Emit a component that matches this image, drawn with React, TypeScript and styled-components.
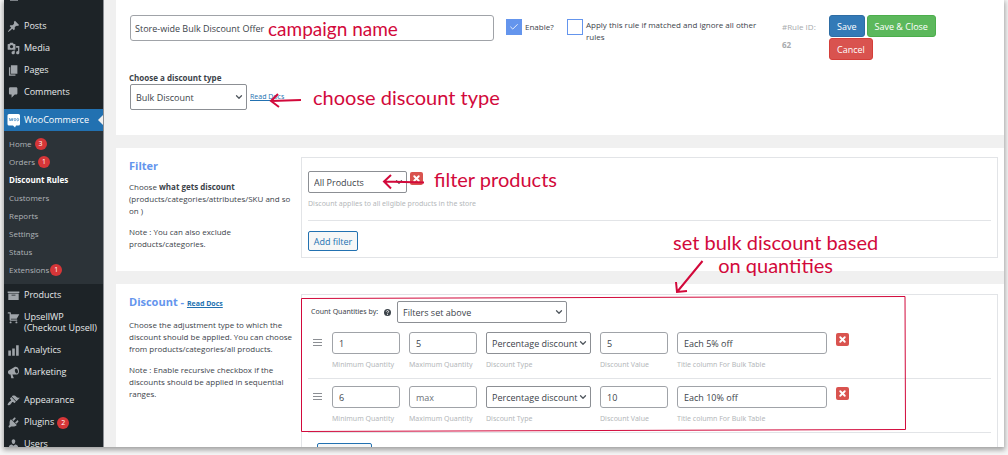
import React from "react";
import styled, { createGlobalStyle } from "styled-components";
import { ChevronDown, X, Check } from "lucide-react";

const FONT = '"Open Sans", "Noto Sans", sans-serif';
const SMALL_FONT = '"Noto Sans", "Open Sans", sans-serif';
const RED = "#d2093b";

const GlobalStyle = createGlobalStyle`
  *, *::before, *::after { box-sizing: border-box; }
  body {
    margin: 0;
    background: #f6f6f6;
    font-family: ${FONT};
    font-size: 9px;
    line-height: 12px;
    color: #3c434a;
  }
  input, select, button { font-family: inherit; font-size: inherit; color: inherit; }
  p, h2, ul { margin: 0; padding: 0; }
`;

const Page = styled.div`
  height: 100vh;
  padding: 0 4px 8px;
`;

const Frame = styled.div`
  position: relative;
  display: flex;
  height: 100%;
  overflow: hidden;
  background: #f0f0f0;
`;

const Shadow = styled.div`
  height: 100%;
  box-shadow: 0 2px 5px 1px rgba(0, 0, 0, 0.35);
`;

/* ---------- sidebar ---------- */

const Sidebar = styled.nav`
  flex: 0 0 100px;
  background: #1d2327;
  border-right: 1px solid #8c8f94;
`;

const PreviousItem = styled.div`
  height: 15px;
  padding-left: 6px;
  &::before {
    content: "";
    display: block;
    width: 8px;
    height: 1px;
    background: #7d8287;
  }
`;

const MenuGroup = styled.ul`
  list-style: none;
  padding-bottom: 6px;
`;

const MenuLink = styled.a<{ $active?: boolean; $tall?: boolean }>`
  position: relative;
  display: grid;
  grid-template-columns: 13px 1fr;
  column-gap: 4px;
  align-items: ${(p) => (p.$tall ? "start" : "center")};
  min-height: ${(p) => (p.$tall ? 33 : 22)}px;
  padding: ${(p) => (p.$tall ? "5px 0 4px 3px" : "0 0 0 3px")};
  line-height: ${(p) => (p.$tall ? 11 : 12)}px;
  color: ${(p) => (p.$active ? "#ffffff" : "#e6e8ea")};
  background: ${(p) => (p.$active ? "#2271b1" : "transparent")};
  text-decoration: none;
  white-space: nowrap;
  svg { display: block; fill: #a0a5aa; }
  &::after {
    content: "";
    display: ${(p) => (p.$active ? "block" : "none")};
    position: absolute;
    right: 0;
    top: 6px;
    border: 5px solid transparent;
    border-left-width: 0;
    border-right-color: #f0f0f0;
  }
`;

const SubMenu = styled.ul`
  list-style: none;
  padding: 4px 0 5px;
  background: #2c3338;
`;

const SubLink = styled.a<{ $current?: boolean }>`
  display: flex;
  align-items: center;
  height: 18px;
  padding-left: 5px;
  color: ${(p) => (p.$current ? "#ffffff" : "#b0b4b8")};
  font-size: 8px;
  font-weight: ${(p) => (p.$current ? 700 : 400)};
  text-decoration: none;
`;

const Badge = styled.span<{ $tight?: boolean }>`
  display: inline-flex;
  align-items: center;
  justify-content: center;
  width: 12px;
  height: 12px;
  margin-left: ${(p) => (p.$tight ? 1 : 3)}px;
  border-radius: 50%;
  background: #d63638;
  color: #ffffff;
  font-size: 7px;
  line-height: 12px;
  font-weight: 400;
`;

/* ---------- content ---------- */

const Content = styled.main`
  flex: 1;
  min-width: 0;
  display: flex;
  flex-direction: column;
  gap: 13px;
  padding-left: 12px;
`;

const Panel = styled.section`
  background: #ffffff;
`;

const SplitPanel = styled(Panel)`
  display: grid;
  grid-template-columns: 172px minmax(0, 1fr);
  align-items: start;
  padding: 9px 6px 12px 13px;
`;

const GrowPanel = styled(SplitPanel)`
  flex: 1 0 auto;
  padding-bottom: 0;
`;

const RuleForm = styled.div`
  display: grid;
  grid-template-columns: minmax(0, 364fr) 49px minmax(0, 203fr) 35px 175px;
  column-gap: 12px;
  align-items: start;
  padding: 15px 0 0 14px;
`;

const TextField = styled.input<{ $large?: boolean }>`
  display: block;
  width: 100%;
  height: ${(p) => (p.$large ? 26 : 22)}px;
  padding: 0 0 0 ${(p) => (p.$large ? 4 : 6)}px;
  border: 1px solid #a0a3a8;
  border-radius: 3px;
  background: #ffffff;
  color: #3c434a;
  &::placeholder { color: #6c7278; opacity: 1; }
`;

const CheckLabel = styled.label`
  display: flex;
  align-items: flex-start;
  gap: 3px;
  padding-top: 4px;
  font-size: 8px;
`;

const CheckText = styled.span<{ $single?: boolean }>`
  padding-top: ${(p) => (p.$single ? 2 : 0)}px;
`;

const CheckHolder = styled.span`
  display: grid;
  flex: 0 0 16px;
  svg {
    grid-area: 1 / 1;
    place-self: center;
    color: #ffffff;
    pointer-events: none;
  }
`;

const CheckBox = styled.input`
  grid-area: 1 / 1;
  appearance: none;
  width: 16px;
  height: 16px;
  margin: 0;
  border: 1px solid #6495ed;
  background: #ffffff;
  &:checked { background: #6495ed; }
`;

const RuleId = styled.div`
  padding-top: 3px;
  color: #a7aaad;
  font-size: 8px;
  line-height: 18px;
  white-space: nowrap;
`;

const Actions = styled.div`
  display: flex;
  flex-wrap: wrap;
  gap: 1px 2px;
  max-width: 110px;
`;

const ActionButton = styled.button<{ $color: string; $border: string }>`
  height: 22px;
  padding: 0 7px;
  border: 1px solid ${(p) => p.$border};
  border-radius: 3px;
  background: ${(p) => p.$color};
  color: #ffffff;
`;

const TypeField = styled.div`
  padding: 12px 0 25px 13px;
`;

const TypeLabel = styled.label`
  display: block;
  font-size: 8px;
  font-weight: 700;
`;

const TypeLine = styled.div`
  display: flex;
  align-items: center;
  gap: 3px;
  padding-left: 1px;
`;

const DocsLink = styled.a<{ $bold?: boolean }>`
  color: #2271b1;
  font-size: 7px;
  font-weight: ${(p) => (p.$bold ? 700 : 400)};
`;

const SelectBox = styled.span<{ $width: string }>`
  display: grid;
  align-items: center;
  width: ${(p) => p.$width};
  font-size: 9px;
  svg {
    grid-area: 1 / 1;
    justify-self: end;
    margin-right: 3px;
    pointer-events: none;
    color: #50575e;
  }
`;

const SelectInput = styled.select<{ $large?: boolean }>`
  grid-area: 1 / 1;
  appearance: none;
  width: 100%;
  height: ${(p) => (p.$large ? 26 : 22)}px;
  padding: 0 0 0 5px;
  border: 1px solid #8c8f94;
  border-radius: 2px;
  background: #ffffff;
  color: #3c434a;
  font-family: ${FONT};
`;

const Heading = styled.h2`
  padding: 1px 0 7px;
  color: #6495ed;
  font-size: 11px;
  line-height: 16px;
  font-weight: 700;
`;

const Description = styled.p`
  padding-right: 6px;
  margin-bottom: 9px;
  font-size: 8px;
`;

const Box = styled.div`
  border: 1px solid #e2e4e7;
  padding: 13px 6px 6px;
`;

const RangeBox = styled(Box)`
  margin-top: 1px;
  padding-top: 6px;
`;

const FilterLine = styled.div`
  display: flex;
  align-items: flex-start;
  gap: 3px;
`;

const Hint = styled.span`
  display: block;
  color: #b4b7ba;
  font-family: ${SMALL_FONT};
  font-size: 7px;
  line-height: 10px;
  white-space: nowrap;
`;

const FilterHint = styled(Hint)`
  padding: 6px 0 11px;
  border-bottom: 1px solid #e2e4e7;
  margin-bottom: 10px;
`;

const RemoveButton = styled.button`
  display: flex;
  align-items: center;
  justify-content: center;
  width: 13px;
  height: 13px;
  margin-top: 1px;
  padding: 0;
  border: 0;
  border-radius: 2px;
  background: #d9534f;
  color: #ffffff;
`;

const OutlineButton = styled.button`
  display: block;
  min-width: 50px;
  height: 20px;
  padding: 0 4px;
  border: 1px solid #2271b1;
  border-radius: 2px;
  background: #f6f7f7;
  color: #2271b1;
`;

const CountLine = styled.div`
  display: flex;
  align-items: center;
  gap: 6px;
  padding-left: 3px;
  font-family: ${SMALL_FONT};
  font-size: 7px;
`;

const RangeRow = styled.div`
  display: grid;
  grid-template-columns: 11px 68px 68px 105px 68px 150px 13px;
  column-gap: 9px;
  align-items: start;
  height: 54px;
  padding: 7px 0 0 4px;
  border-bottom: 1px solid #e2e4e7;
`;

const FirstRangeRow = styled(RangeRow)`
  height: 56px;
  padding-top: 9px;
`;

const Handle = styled.span`
  display: flex;
  flex-direction: column;
  gap: 2px;
  padding: 7px 0 0 1px;
  i { width: 9px; height: 1px; background: #8c8f94; }
`;

const Field = styled.label`
  display: flex;
  flex-direction: column;
  gap: 6px;
`;

const AddRange = styled.div`
  display: grid;
  grid-template-columns: 55px;
  padding: 10px 0 0 9px;
`;

/* ---------- hand-drawn notes over the screen ---------- */

const Note = styled.div<{ $left: number; $top: number; $size?: number }>`
  position: absolute;
  left: ${(p) => p.$left}px;
  top: ${(p) => p.$top}px;
  color: ${RED};
  font-family: Lato, sans-serif;
  font-size: ${(p) => p.$size ?? 20}px;
  line-height: 23px;
  text-align: center;
  white-space: nowrap;
`;

const Marks = styled.svg`
  position: absolute;
  left: 0;
  top: 0;
  pointer-events: none;
`;

const ICONS: Record<string, string> = {
  posts:
    "M10.44 3.02l1.82-1.82 6.36 6.35-1.83 1.82c-1.05-.68-2.48-.57-3.41.36l-.75.75c-.92.93-1.04 2.35-.35 3.41l-1.83 1.82-2.41-2.41-2.8 2.79c-.42.42-3.38 2.71-3.8 2.29s1.86-3.39 2.28-3.81l2.79-2.79L4.1 9.36l1.83-1.82c1.05.69 2.48.57 3.4-.36l.75-.75c.93-.92 1.05-2.35.36-3.41z",
  media:
    "M13 11V4c0-.55-.45-1-1-1h-1.67L9 1H5L3.67 3H2c-.55 0-1 .45-1 1v7c0 .55.45 1 1 1h10c.55 0 1-.45 1-1zM7 4.5c1.38 0 2.5 1.12 2.5 2.5S8.38 9.5 7 9.5 4.5 8.38 4.5 7 5.62 4.5 7 4.5zM14 6h5v10.5c0 1.38-1.12 2.5-2.5 2.5S14 17.88 14 16.5s1.12-2.5 2.5-2.5c.17 0 .34.02.5.05V9h-3V6zm-4 8.05V13h2v3.5c0 1.38-1.12 2.5-2.5 2.5S7 17.88 7 16.5 8.12 14 9.5 14c.17 0 .34.02.5.05z",
  pages: "M6 15V2h10v13H6zm-1 1h8v2H3V5h2v11z",
  comments:
    "M5 2h9c1.1 0 2 .9 2 2v7c0 1.1-.9 2-2 2h-2l-5 5v-5H5c-1.1 0-2-.9-2-2V4c0-1.1.9-2 2-2z",
  products: "M19 4v2H1V4h18zM2 7h16v10H2V7zm11 3V9H7v1h6z",
  cart: "M6 13h9c.55 0 1 .45 1 1s-.45 1-1 1H5c-.55 0-1-.45-1-1V4H2c-.55 0-1-.45-1-1s.45-1 1-1h3c.55 0 1 .45 1 1v2h13l-4 7H6v1zm-.5 3c.83 0 1.5.67 1.5 1.5S6.33 19 5.5 19 4 18.33 4 17.5 4.67 16 5.5 16zm9 0c.83 0 1.5.67 1.5 1.5s-.67 1.5-1.5 1.5-1.5-.67-1.5-1.5.67-1.5 1.5-1.5z",
  analytics: "M18 18V2h-4v16h4zm-6 0V7H8v11h4zm-6 0v-8H2v8h4z",
  marketing:
    "M18.15 5.94c.46 1.62.38 3.22-.02 4.48-.42 1.28-1.26 2.18-2.3 2.48-.16.06-.26.06-.4.06-.06.02-.12.02-.18.02-.06.02-.14.02-.22.02h-6.8l2.22 5.5c.02.14-.06.26-.14.34-.08.1-.24.16-.34.16H6.95c-.1 0-.26-.06-.34-.16-.08-.08-.16-.2-.14-.34l-1-5.5H4.25l-.02-.02c-.5.06-1.08-.18-1.54-.62s-.88-1.08-1.06-1.88c-.24-.8-.2-1.56-.02-2.2.18-.62.58-1.08 1.06-1.3l.02-.02 9-5.4c.1-.06.18-.1.24-.16.06-.04.14-.08.24-.12.16-.08.28-.12.5-.18 1.04-.3 2.24.1 3.22.98s1.84 2.24 2.26 3.86zM14 4.2c-1.6.2-2.300 2-1.800 4s1.800 3.600 3.200 3.200 1.800-2.300 1.300-4.200-1.500-3.200-2.700-3z",
  appearance:
    "M14.48 11.06L7.41 3.99l1.5-1.5c.5-.56 2.3-.47 3.51.32 1.21.8 1.43 1.28 2.91 2.1 1.18.64 2.45 1.26 4.45.85zm-.71.71L6.7 4.7 4.93 6.47c-.39.39-.39 1.02 0 1.41l1.06 1.06c.39.39.39 1.03 0 1.42-.6.6-1.43 1.11-2.21 1.69-.35.26-.7.53-1.01.84C1.43 14.23.4 16.08 1.4 17.07c.99 1 2.84-.03 4.18-1.36.31-.31.58-.66.85-1.02.57-.78 1.08-1.61 1.69-2.21.39-.39 1.02-.39 1.41 0l1.06 1.06c.39.39 1.02.39 1.41 0z",
  plugins:
    "M13.11 4.36L9.87 7.6 8 5.73l3.24-3.24c.35-.34 1.05-.2 1.56.32.52.51.66 1.21.31 1.55zm-8 1.77l.91-1.12 9.01 9.01-1.19.84c-.71.71-2.63 1.16-3.82 1.16H6.14L4.9 17.26c-.59.59-1.54.59-2.12 0-.59-.58-.59-1.53 0-2.12l1.24-1.24v-3.88c0-1.13.4-3.19 1.09-3.89zm7.26 3.97l3.24-3.24c.34-.35 1.04-.21 1.55.31.52.51.66 1.21.31 1.55l-3.24 3.25z",
  users:
    "M10 9.25c-2.27 0-2.73-3.44-2.73-3.44C7 4.02 7.82 2 9.97 2c2.16 0 2.98 2.02 2.71 3.81 0 0-.41 3.44-2.68 3.44zm0 2.57L12.72 10c2.39 0 4.52 2.33 4.52 4.53v2.49s-3.65 1.13-7.24 1.13c-3.65 0-7.24-1.13-7.24-1.13v-2.49c0-2.25 1.94-4.48 4.47-4.48z",
};

function MenuIcon({ name }: { name: string }) {
  return (
    <svg width="13" height="13" viewBox="0 0 20 20" aria-hidden="true">
      <path fillRule="evenodd" d={ICONS[name]} />
    </svg>
  );
}

function WooIcon() {
  return (
    <svg width="14" height="15" viewBox="0 0 14 15" aria-hidden="true">
      <path
        d="M2 1h9.500a1.500 1.500 0 0 1 1.500 1.500v8.500a1.500 1.500 0 0 1-1.500 1.500H9l-1 2-2-2H2A1.500 1.500 0 0 1 .5 11V2.500A1.500 1.500 0 0 1 2 1z"
        fill="#ffffff"
      />
      <path
        d="M2.300 5l.8 3 1.200-2.500.8 2.500.8-3M8 5.300c-1.200 0-1.200 2.600 0 2.600s1.200-2.600 0-2.600zM10.800 5.300c-1.200 0-1.200 2.600 0 2.600s1.200-2.600 0-2.600z"
        fill="none"
        stroke="#4f8fc4"
        strokeWidth="0.8"
      />
    </svg>
  );
}

type Item = { icon: string; label: React.ReactNode; tall?: boolean; badge?: number };

function Menu({ items }: { items: Item[] }) {
  return (
    <MenuGroup>
      {items.map((item) => (
        <li key={item.icon}>
          <MenuLink href="#" $tall={item.tall}>
            <MenuIcon name={item.icon} />
            <span>
              {item.label}
              {item.badge && <Badge>{item.badge}</Badge>}
            </span>
          </MenuLink>
        </li>
      ))}
    </MenuGroup>
  );
}

const SUB_ITEMS: { label: string; badge?: number; current?: boolean; tight?: boolean }[] = [
  { label: "Home", badge: 3 },
  { label: "Orders", badge: 1 },
  { label: "Discount Rules", current: true },
  { label: "Customers" },
  { label: "Reports" },
  { label: "Settings" },
  { label: "Status" },
  { label: "Extensions", badge: 1, tight: true },
];

function Select(props: { value: string; width: string; large?: boolean; id?: string; label?: string }) {
  return (
    <SelectBox $width={props.width}>
      <SelectInput id={props.id} $large={props.large} aria-label={props.label} defaultValue={props.value}>
        <option>{props.value}</option>
      </SelectInput>
      <ChevronDown size={10} strokeWidth={3} />
    </SelectBox>
  );
}

function Remove() {
  return (
    <RemoveButton type="button" aria-label="Remove">
      <X size={9} strokeWidth={5} />
    </RemoveButton>
  );
}

function RangeFields(props: { min: string; max?: string; value: string; title: string }) {
  return (
    <>
      <Handle>
        <i />
        <i />
        <i />
      </Handle>
      <Field>
        <TextField defaultValue={props.min} />
        <Hint>Minimum Quantity</Hint>
      </Field>
      <Field>
        <TextField defaultValue={props.max} placeholder="max" />
        <Hint>Maximum Quantity</Hint>
      </Field>
      <Field>
        <Select value="Percentage discount" width="100%" />
        <Hint>Discount Type</Hint>
      </Field>
      <Field>
        <TextField defaultValue={props.value} />
        <Hint>Discount Value</Hint>
      </Field>
      <Field>
        <TextField defaultValue={props.title} />
        <Hint>Title column For Bulk Table</Hint>
      </Field>
      <Remove />
    </>
  );
}

export default function App() {
  return (
    <Page>
      <GlobalStyle />
      <Shadow>
        <Frame>
          <Sidebar>
            <PreviousItem />
            <Menu
              items={[
                { icon: "posts", label: "Posts" },
                { icon: "media", label: "Media" },
                { icon: "pages", label: "Pages" },
                { icon: "comments", label: "Comments" },
              ]}
            />
            <MenuLink href="#" $active>
              <WooIcon />
              <span>WooCommerce</span>
            </MenuLink>
            <SubMenu>
              {SUB_ITEMS.map((item) => (
                <li key={item.label}>
                  <SubLink href="#" $current={item.current}>
                    {item.label}
                    {item.badge && <Badge $tight={item.tight}>{item.badge}</Badge>}
                  </SubLink>
                </li>
              ))}
            </SubMenu>
            <Menu
              items={[
                { icon: "products", label: "Products" },
                {
                  icon: "cart",
                  tall: true,
                  label: (
                    <>
                      UpsellWP
                      <br />
                      (Checkout Upsell)
                    </>
                  ),
                },
                { icon: "analytics", label: "Analytics" },
                { icon: "marketing", label: "Marketing" },
              ]}
            />
            <Menu
              items={[
                { icon: "appearance", label: "Appearance" },
                { icon: "plugins", label: "Plugins", badge: 2 },
                { icon: "users", label: "Users" },
              ]}
            />
          </Sidebar>

          <Content>
            <Panel>
              <RuleForm>
                <TextField $large aria-label="Campaign name" defaultValue="Store-wide Bulk Discount Offer" />
                <CheckLabel>
                  <CheckHolder>
                    <CheckBox type="checkbox" defaultChecked />
                    <Check size={10} strokeWidth={2} />
                  </CheckHolder>
                  <CheckText $single>Enable?</CheckText>
                </CheckLabel>
                <CheckLabel>
                  <CheckHolder>
                    <CheckBox type="checkbox" />
                  </CheckHolder>
                  <CheckText>Apply this rule if matched and ignore all other rules</CheckText>
                </CheckLabel>
                <RuleId>
                  #Rule ID:
                  <br />
                  <b>62</b>
                </RuleId>
                <Actions>
                  <ActionButton type="button" $color="#337ab7" $border="#2e6da4">
                    Save
                  </ActionButton>
                  <ActionButton type="button" $color="#5cb85c" $border="#4cae4c">
                    Save &amp; Close
                  </ActionButton>
                  <ActionButton type="button" $color="#d9534f" $border="#d43f3a">
                    Cancel
                  </ActionButton>
                </Actions>
              </RuleForm>
              <TypeField>
                <TypeLabel htmlFor="discount-type">Choose a discount type</TypeLabel>
                <TypeLine>
                  <Select id="discount-type" value="Bulk Discount" width="117px" large />
                  <DocsLink href="#">Read Docs</DocsLink>
                </TypeLine>
              </TypeField>
            </Panel>

            <SplitPanel>
              <div>
                <Heading>Filter</Heading>
                <Description>
                  Choose <b>what gets discount</b> (products/categories/attributes/SKU and so on )
                </Description>
                <Description>Note : You can also exclude products/categories.</Description>
              </div>
              <Box>
                <FilterLine>
                  <Select label="Filter" value="All Products" width="99px" />
                  <Remove />
                </FilterLine>
                <FilterHint>Discount applies to all eligible products in the store</FilterHint>
                <OutlineButton type="button">Add filter</OutlineButton>
              </Box>
            </SplitPanel>

            <GrowPanel>
              <div>
                <Heading>
                  Discount -{" "}
                  <DocsLink href="#" $bold>
                    Read Docs
                  </DocsLink>
                </Heading>
                <Description>
                  Choose the adjustment type to which the discount should be applied. You can choose from
                  products/categories/all products.
                </Description>
                <Description>
                  Note : Enable recursive checkbox if the discounts should be applied in sequential ranges.
                </Description>
              </div>
              <RangeBox>
                <CountLine>
                  <label htmlFor="count-by">Count Quantities by:</label>
                  <svg width="7" height="7" viewBox="0 0 14 14" aria-hidden="true">
                    <circle cx="7" cy="7" r="7" fill="#3c434a" />
                    <path d="M4.800 5.200c0-3 4.600-2.600 4.400 0C9.100 6.700 7 6.700 7 8.600M7 9.800v2" fill="none" stroke="#fff" strokeWidth="1.800" />
                  </svg>
                  <Select id="count-by" value="Filters set above" width="170px" />
                </CountLine>
                <FirstRangeRow>
                  <RangeFields min="1" max="5" value="5" title="Each 5% off" />
                </FirstRangeRow>
                <RangeRow>
                  <RangeFields min="6" value="10" title="Each 10% off" />
                </RangeRow>
                <AddRange>
                  <OutlineButton type="button" aria-label="Add range" />
                </AddRange>
              </RangeBox>
            </GrowPanel>
          </Content>

          <Note $left={264} $top={17} $size={19}>campaign name</Note>
          <Note $left={309} $top={86}>choose discount type</Note>
          <Note $left={430} $top={168}>filter products</Note>
          <Note $left={669} $top={231}>
            set bulk discount based
            <br />
            on quantities
          </Note>
          <Marks width="1000" height="447" viewBox="4 0 1000 447" fill="none" stroke={RED} strokeWidth="2" aria-hidden="true">
            <path d="M301 100L271 101M278 94l-7 7 8 6" />
            <path d="M424 182.500L384 181.500M391 175l-7 6.500 7 7" />
            <path d="M702.500 261L677 292M676 282l1 10 10-1" />
            <path d="M301.500 298.500L905 296.500L905.500 429.500L301.500 431.500z" strokeWidth="1" />
          </Marks>
        </Frame>
      </Shadow>
    </Page>
  );
}
